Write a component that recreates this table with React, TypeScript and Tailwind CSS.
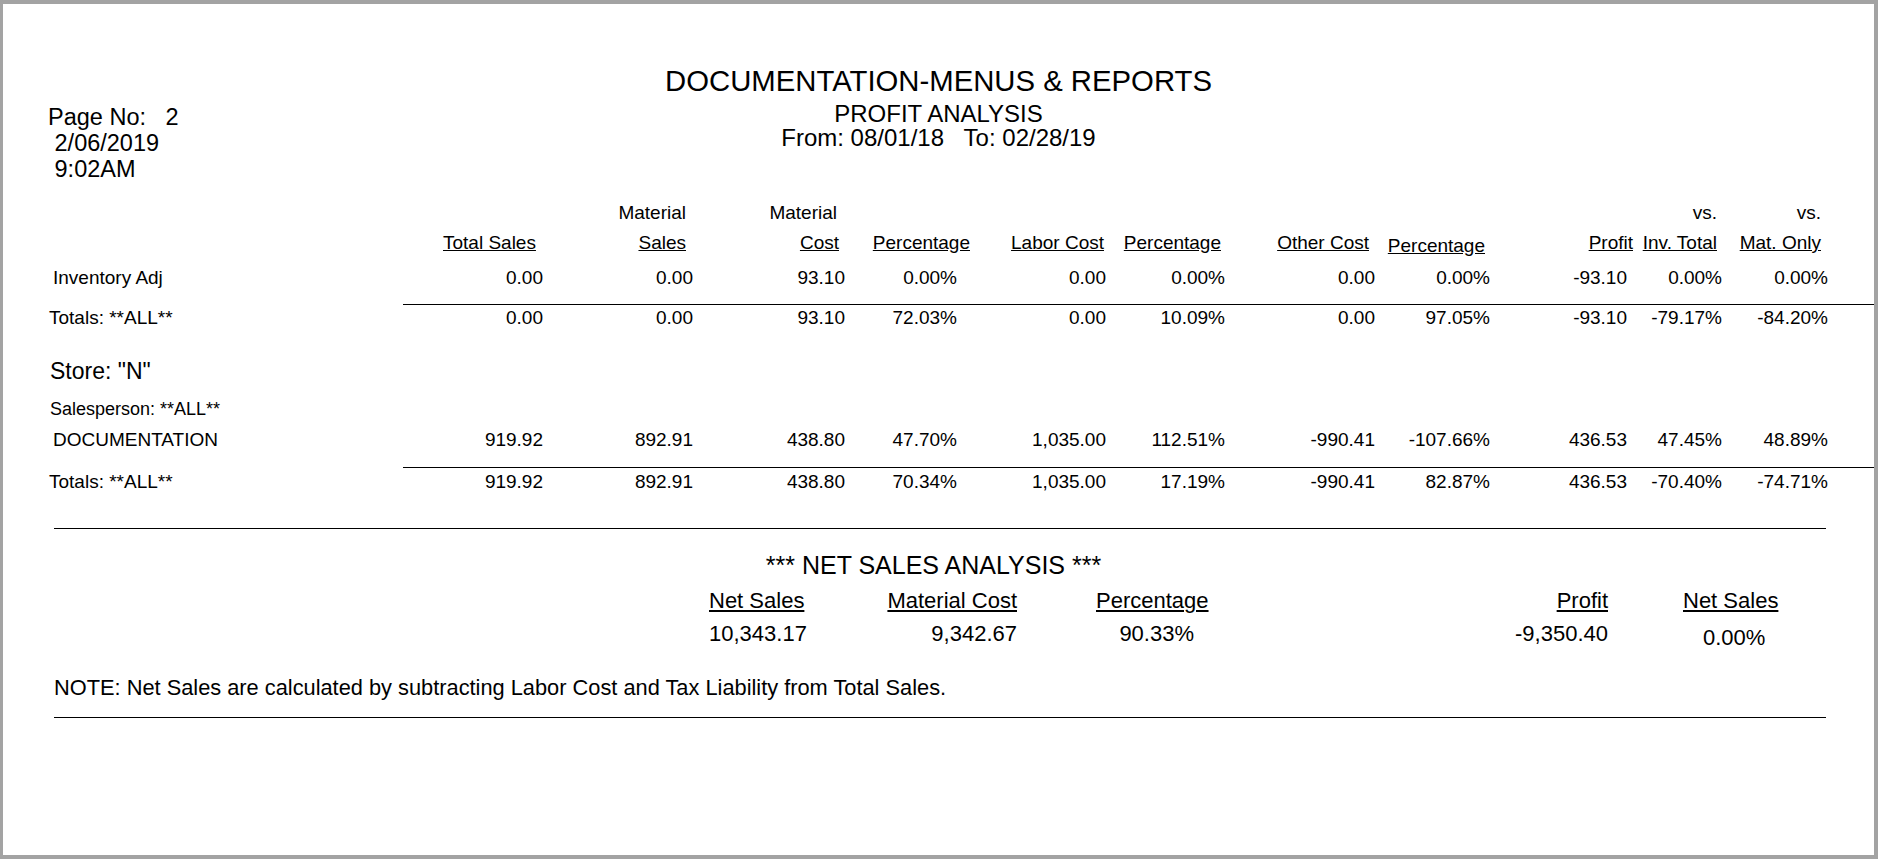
const dataW = [
  'w-[100px]',
  'w-[150px]',
  'w-[152px]',
  'w-[112px]',
  'w-[149px]',
  'w-[119px]',
  'w-[150px]',
  'w-[115px]',
  'w-[137px]',
  'w-[95px]',
  'w-[106px]',
];

const headW = [
  'w-[89px]',
  'w-[154px]',
  'w-[153px]',
  'w-[131px]',
  'w-[134px]',
  'w-[117px]',
  'w-[148px]',
  'w-[116px]',
  'w-[148px]',
  'w-[84px]',
  'w-[104px]',
];

const headTop = ['', 'Material', 'Material', '', '', '', '', '', '', 'vs.', 'vs.'];
const headBottom = [
  'Total Sales',
  'Sales',
  'Cost',
  'Percentage',
  'Labor Cost',
  'Percentage',
  'Other Cost',
  'Percentage',
  'Profit',
  'Inv. Total',
  'Mat. Only',
];

const invRow = ['0.00', '0.00', '93.10', '0.00%', '0.00', '0.00%', '0.00', '0.00%', '-93.10', '0.00%', '0.00%'];
const invTotals = ['0.00', '0.00', '93.10', '72.03%', '0.00', '10.09%', '0.00', '97.05%', '-93.10', '-79.17%', '-84.20%'];
const docRow = ['919.92', '892.91', '438.80', '47.70%', '1,035.00', '112.51%', '-990.41', '-107.66%', '436.53', '47.45%', '48.89%'];
const docTotals = ['919.92', '892.91', '438.80', '70.34%', '1,035.00', '17.19%', '-990.41', '82.87%', '436.53', '-70.40%', '-74.71%'];

function DataRow({ label, pad, values, mt }: { label: string; pad: string; values: string[]; mt: string }) {
  return (
    <div className={`flex h-[24px] shrink-0 text-[19px] leading-[24px] whitespace-nowrap ${mt}`}>
      <div className={`w-[440px] ${pad}`}>{label}</div>
      {values.map((v, i) => (
        <div key={i} className={`${dataW[i]} text-right`}>
          {v}
        </div>
      ))}
    </div>
  );
}

function Rule({ mt }: { mt: string }) {
  return <div className={`ml-[400px] h-px shrink-0 bg-black ${mt}`} />;
}

export default function App() {
  return (
    <div className="h-[859px] w-[1878px] overflow-hidden border-t-4 border-r-4 border-b-4 border-l-[3px] border-[#a3a3a3] bg-white font-['Liberation_Sans',Arial,sans-serif] text-black">
      <div className="flex h-full flex-col">
        {/* report header */}
        <div className="grid h-[194px] shrink-0 grid-cols-[1fr_auto_1fr]">
          <div className="whitespace-pre pt-[100px] pl-[45px] text-[23.5px] leading-[26px]">
            <div>Page No:   2</div>
            <div> 2/06/2019</div>
            <div> 9:02AM</div>
          </div>
          <div className="whitespace-pre pt-[57px] text-center">
            <div className="text-[29.3px] leading-[40px]">DOCUMENTATION-MENUS &amp; REPORTS</div>
            <div className="text-[24px] leading-[25px]">PROFIT ANALYSIS</div>
            <div className="text-[24px] leading-[23px]">From: 08/01/18   To: 02/28/19</div>
          </div>
          <div />
        </div>

        {/* column headings */}
        <div className="flex h-[30px] shrink-0 text-[19px] leading-[30px] whitespace-nowrap">
          <div className="w-[440px]" />
          {headTop.map((t, i) => (
            <div key={i} className={`${headW[i]} text-right ${i === 2 ? 'pr-[2px]' : ''}`}>
              {t}
            </div>
          ))}
        </div>
        <div className="flex h-[30px] shrink-0 text-[19px] leading-[30px] whitespace-nowrap">
          <div className="w-[440px]" />
          {headBottom.map((t, i) => (
            <div key={i} className={`${headW[i]} text-right ${i === 7 ? 'pt-[3px]' : ''}`}>
              <span className="underline">{t}</span>
            </div>
          ))}
        </div>

        <DataRow label="Inventory Adj" pad="pl-[50px]" values={invRow} mt="mt-[8px]" />
        <Rule mt="mt-[14px]" />
        <DataRow label="Totals: **ALL**" pad="pl-[46px]" values={invTotals} mt="mt-[1px]" />

        <div className="mt-[26px] h-[30px] shrink-0 pl-[47px] text-[23px] leading-[30px]">{'Store: "N"'}</div>
        <div className="mt-[11px] h-[24px] shrink-0 pl-[47px] text-[18px] leading-[24px]">Salesperson: **ALL**</div>

        <DataRow label="DOCUMENTATION" pad="pl-[50px]" values={docRow} mt="mt-[7px]" />
        <Rule mt="mt-[15px]" />
        <DataRow label="Totals: **ALL**" pad="pl-[46px]" values={docTotals} mt="mt-[2px]" />

        {/* net sales analysis */}
        <div className="mt-[34px] ml-[51px] h-px w-[1772px] shrink-0 bg-black" />
        <div className="mt-[21px] h-[30px] shrink-0 pr-[10px] text-center text-[25px] leading-[30px]">
          *** NET SALES ANALYSIS ***
        </div>
        <div className="mt-[7px] flex h-[28px] shrink-0 pl-[706px] text-[22px] leading-[28px] whitespace-nowrap">
          <div className="w-[178px]">
            <span className="underline">Net Sales</span>
          </div>
          <div className="w-[130px] text-right">
            <span className="underline">Material Cost</span>
          </div>
          <div className="ml-[79px] w-[109px]">
            <span className="underline">Percentage</span>
          </div>
          <div className="w-[403px] text-right">
            <span className="underline">Profit</span>
          </div>
          <div className="ml-[75px]">
            <span className="underline">Net Sales</span>
          </div>
        </div>
        <div className="mt-[5px] flex h-[28px] shrink-0 pl-[706px] text-[22px] leading-[28px] whitespace-nowrap">
          <div className="w-[178px]">10,343.17</div>
          <div className="w-[130px] text-right">9,342.67</div>
          <div className="ml-[79px] w-[109px] pr-[11px] text-right">90.33%</div>
          <div className="w-[403px] text-right">-9,350.40</div>
          <div className="ml-[75px] pt-[4px] pl-[20px]">0.00%</div>
        </div>

        <div className="mt-[26px] h-[28px] shrink-0 pl-[51px] text-[21.8px] leading-[28px] whitespace-nowrap">
          NOTE: Net Sales are calculated by subtracting Labor Cost and Tax Liability from Total Sales.
        </div>
        <div className="mt-[15px] ml-[51px] h-px w-[1772px] shrink-0 bg-black" />
      </div>
    </div>
  );
}
